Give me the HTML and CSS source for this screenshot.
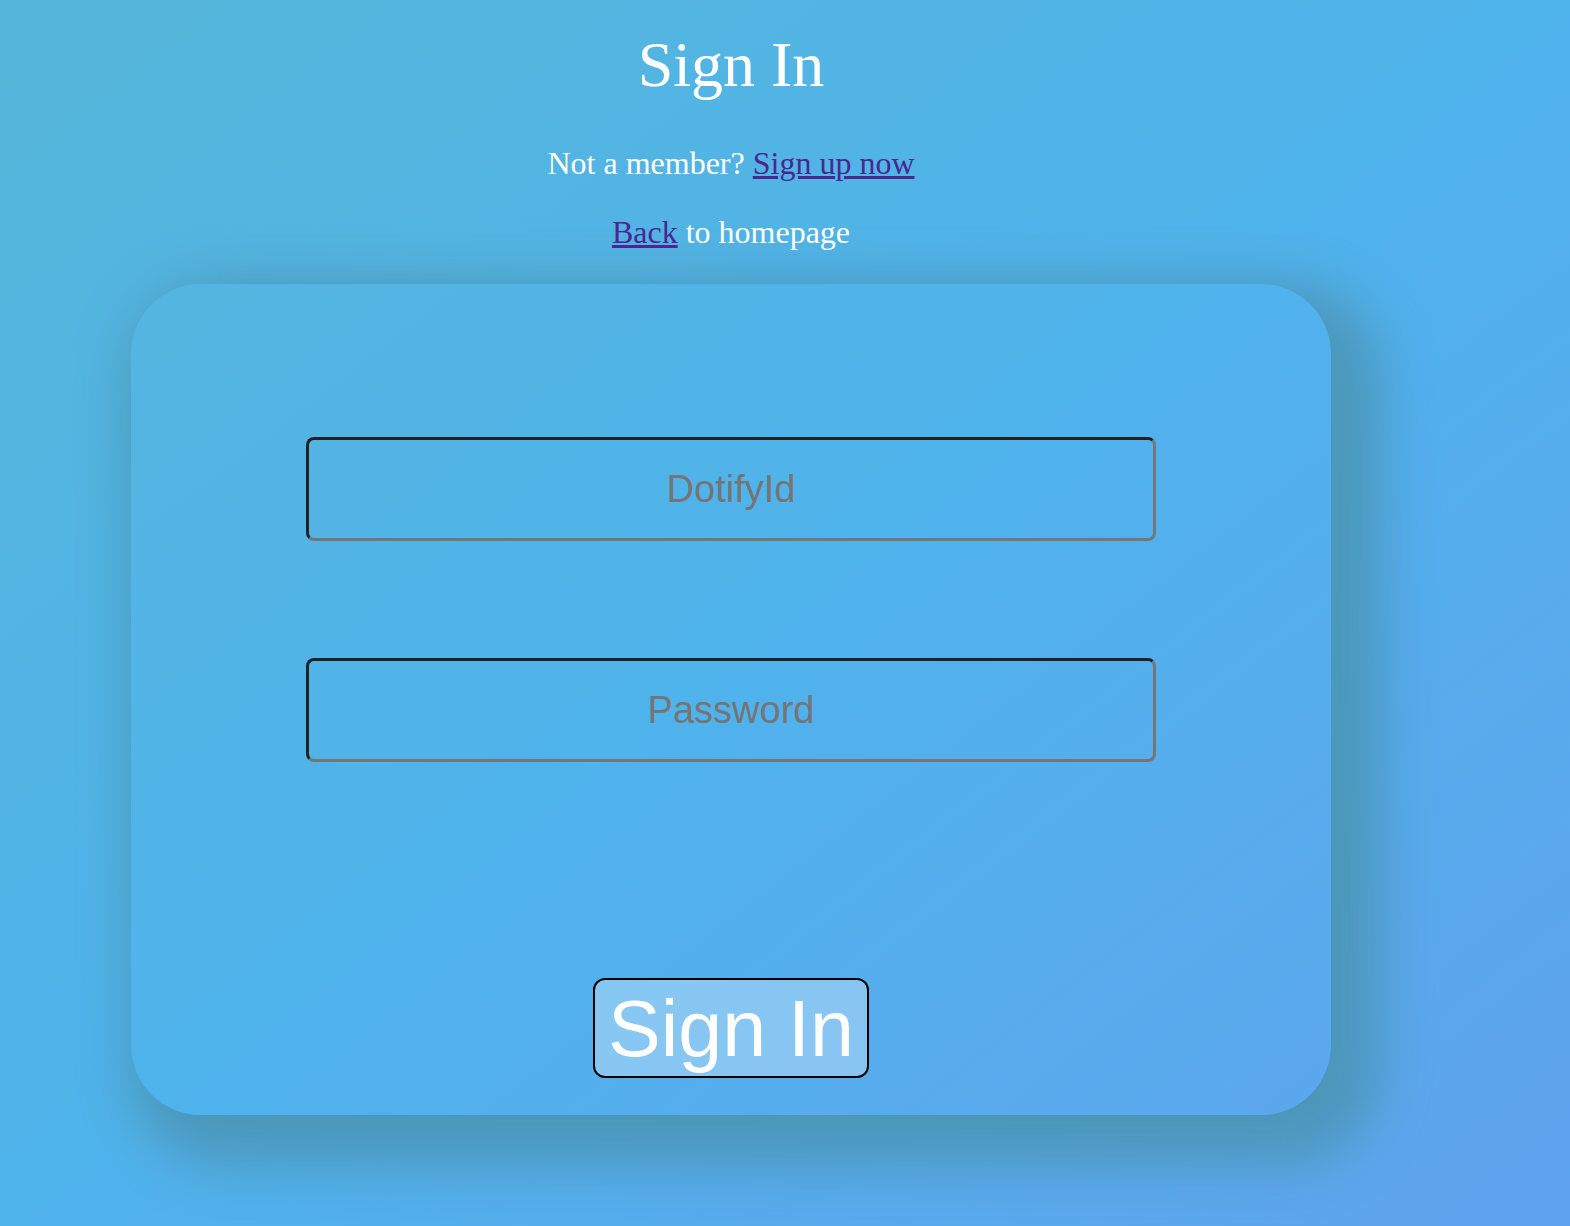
FILE: index.html
```html
<!DOCTYPE html>
<html lang="en">
<head>
<meta charset="utf-8">
<title>Sign In</title>
<link rel="stylesheet" href="styles.css">
</head>
<body>
<div class="page">
  <h1 class="title">Sign In</h1>
  <p class="note">Not a member? <a href="#">Sign up now</a></p>
  <p class="note"><a href="#">Back</a> to homepage</p>
  <form class="card">
    <input class="field" type="text" placeholder="DotifyId">
    <input class="field" type="password" placeholder="Password">
    <button class="submit" type="button">Sign In</button>
  </form>
</div>
</body>
</html>
```

FILE: styles.css
```css
html {
  min-height: 100%;
  background: linear-gradient(to bottom right, #56b6d9 0%, #4fb3ec 50%, #60a3ee 100%);
}
body {
  margin: 0;
  min-height: 1226px;
  font-family: "Liberation Serif", "Times New Roman", serif;
  color: #fff;
}
.page {
  width: 1462px;
  text-align: center;
}
.title {
  font-size: 64px;
  font-weight: normal;
  margin: 0;
  padding-top: 28px;
  margin-bottom: 43px;
  line-height: normal;
}
.note {
  font-size: 32px;
  margin: 32px 0;
}
.note a {
  color: #4b2690;
}
.card {
  width: 1200px;
  height: 831px;
  box-sizing: border-box;
  margin: 33px auto 0;
  border-radius: 70px;
  box-shadow: 24px 24px 50px 26px rgba(74, 150, 182, 0.9);
  display: flex;
  flex-direction: column;
  align-items: center;
  padding-top: 153px;
}
.field {
  width: 850px;
  height: 104px;
  box-sizing: border-box;
  border: 3px solid #767676;
  border-top-color: #222;
  border-left-color: #222;
  border-radius: 8px;
  background: transparent;
  font-family: "Liberation Sans", Arial, sans-serif;
  font-size: 38px;
  text-align: center;
  color: #222;
  outline: none;
}
.field::placeholder {
  color: #757575;
}
.field + .field {
  margin-top: 117px;
}
.submit {
  margin-top: 216px;
  width: 276px;
  height: 100px;
  box-sizing: border-box;
  padding: 0 4px;
  border: 2px solid #000;
  border-radius: 12px;
  background: rgba(255, 255, 255, 0.3);
  color: #fff;
  font-family: "Liberation Sans", Arial, sans-serif;
  font-size: 79px;
  line-height: 1;
}
```
